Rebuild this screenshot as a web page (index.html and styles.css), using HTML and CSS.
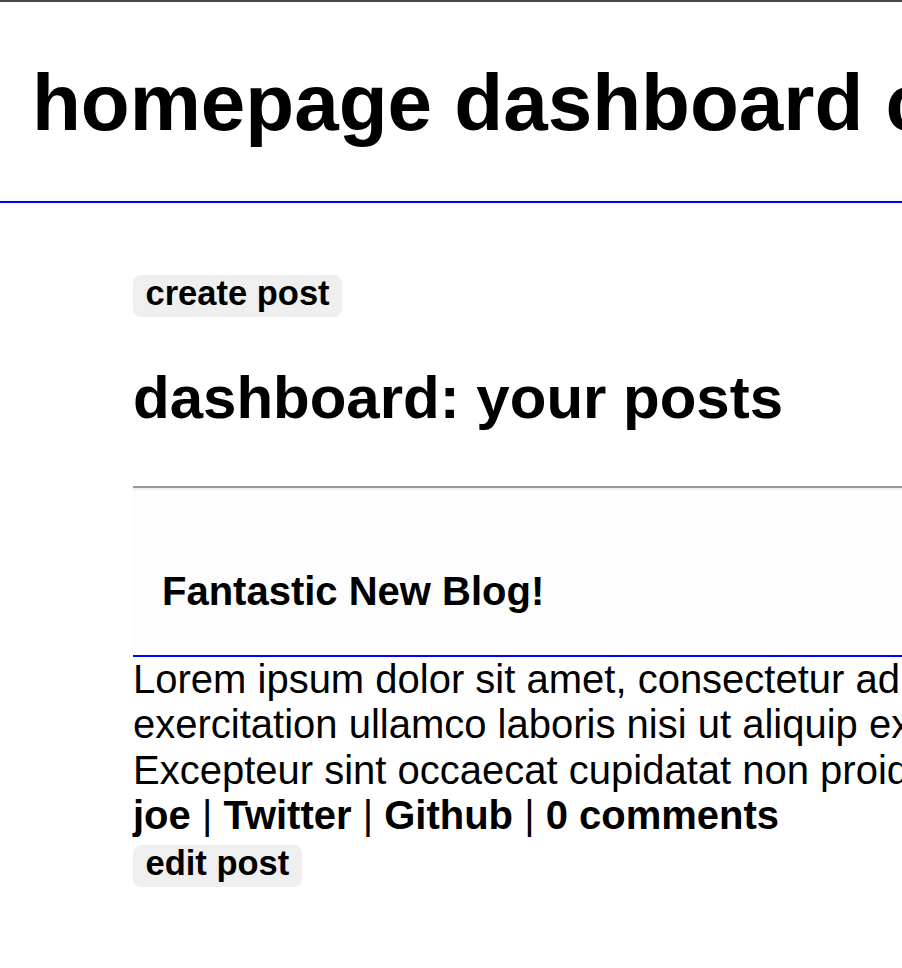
FILE: index.html
```html
<!DOCTYPE html>
<html lang="en">
<head>
<meta charset="utf-8">
<title>dashboard</title>
<link rel="stylesheet" href="styles.css">
</head>
<body>
<header class="site-header">
  <h1 class="site-title"><a class="nav-link" href="#">homepage</a> <a class="nav-link" href="#">dashboard</a> <a class="nav-link" href="#">create</a></h1>
</header>
<main class="main">
  <button class="btn" type="button">create post</button>
  <h2 class="page-title">dashboard: your posts</h2>
  <hr class="divider">
  <article class="post">
    <div class="post-head">
      <h4 class="post-title">Fantastic New Blog!</h4>
    </div>
    <p class="post-body">Lorem ipsum dolor sit amet, consectetur adipiscing elit, sed do eiusmod tempor incididunt ut labore et dolore magna aliqua.
exercitation ullamco laboris nisi ut aliquip ex ea commodo consequat.
Excepteur sint occaecat cupidatat non proident, sunt in culpa qui officia deserunt mollit anim id est laborum.</p>
    <p class="post-meta"><strong>joe</strong> | <a class="meta-link" href="#">Twitter</a> | <a class="meta-link" href="#">Github</a> | <strong>0 comments</strong></p>
    <button class="btn btn-edit" type="button">edit post</button>
  </article>
</main>
</body>
</html>
```
FILE: styles.css
```css
html {
  overflow-x: hidden;
}

body {
  margin: 0;
  font-family: "Liberation Sans", Arial, sans-serif;
  color: #000;
  background: #fff;
}

.site-header {
  border-top: 2px solid #474747;
  border-bottom: 2px solid #0000ff;
  padding-left: 32px;
}

.site-title {
  margin: 55px 0 52px;
  font-size: 80px;
  line-height: 92px;
  font-weight: bold;
  white-space: nowrap;
}

.nav-link {
  color: #000;
  text-decoration: none;
}

.main {
  padding: 72px 0 40px 133px;
}

.btn {
  display: block;
  margin: 0;
  font-family: "Liberation Sans", Arial, sans-serif;
  font-weight: bold;
  font-size: 34.5px;
  line-height: 36px;
  padding: 0 12.5px 6px;
  background: #efefef;
  color: #000;
  border: 0;
  border-radius: 8px;
}

.page-title {
  margin: 46px 0 53.5px;
  font-size: 60px;
  line-height: 69px;
  font-weight: bold;
  white-space: nowrap;
}

.divider {
  margin: 0;
  height: 0;
  border: 0;
  border-top: 2.5px solid #9a9a9a;
  border-bottom: 2px solid #efefef;
}

.post-head {
  background: #fdfdfd;
  padding: 78px 0 41px 29px;
  border-bottom: 2px solid #0000ff;
}

.post-title {
  margin: 0;
  font-size: 40px;
  line-height: 46px;
  font-weight: bold;
  white-space: nowrap;
}

.post-body {
  margin: 0;
  font-size: 40px;
  line-height: 45.5px;
  white-space: pre;
}

.post-meta {
  margin: 0;
  font-size: 40px;
  line-height: 45.5px;
  white-space: nowrap;
}

.meta-link {
  color: #000;
  font-weight: bold;
  text-decoration: none;
}

.btn-edit {
  margin-top: 6px;
}
```
